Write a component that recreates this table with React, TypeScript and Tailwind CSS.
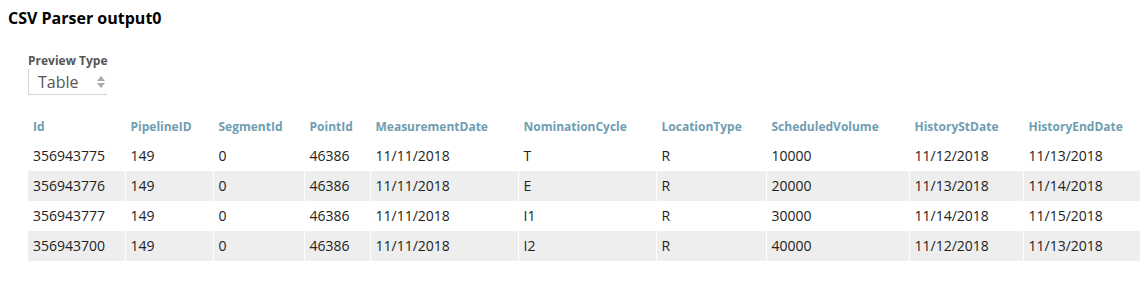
const columns = [
  { key: "Id", width: "w-[97px]" },
  { key: "PipelineID", width: "w-[88px]" },
  { key: "SegmentId", width: "w-[91px]" },
  { key: "PointId", width: "w-[66px]" },
  { key: "MeasurementDate", width: "w-[148px]" },
  { key: "NominationCycle", width: "w-[138px]" },
  { key: "LocationType", width: "w-[110px]" },
  { key: "ScheduledVolume", width: "w-[143px]" },
  { key: "HistoryStDate", width: "w-[114px]" },
  { key: "HistoryEndDate", width: "w-[117px]" },
];

const rows: string[][] = [
  ["356943775", "149", "0", "46386", "11/11/2018", "T", "R", "10000", "11/12/2018", "11/13/2018"],
  ["356943776", "149", "0", "46386", "11/11/2018", "E", "R", "20000", "11/13/2018", "11/14/2018"],
  ["356943777", "149", "0", "46386", "11/11/2018", "I1", "R", "30000", "11/14/2018", "11/15/2018"],
  ["356943700", "149", "0", "46386", "11/11/2018", "I2", "R", "40000", "11/12/2018", "11/13/2018"],
];

export default function App() {
  return (
    <div className="w-[1140px] h-[287px] bg-white font-['Open_Sans',sans-serif] text-[#222]">
      <h1 className="pl-2 pt-[6px] text-[16px] leading-6 font-bold text-black">
        CSV Parser output0
      </h1>

      <div className="ml-7 mt-[23px]">
        <label className="block text-[12px] leading-4 font-bold text-[#555]">
          Preview Type
        </label>
        <div className="flex items-center justify-between w-[79px] h-[26px] border-l border-b border-[#d4d4d4] pl-[9px] pr-[2px]">
          <span className="text-[16px] leading-5 text-[#555]">Table</span>
          <svg width="8" height="12" viewBox="0 0 8 12" className="fill-[#aaa]">
            <path d="M4 0 L8 5 L0 5 Z" />
            <path d="M0 7 L8 7 L4 12 Z" />
          </svg>
        </div>
      </div>

      <table className="ml-7 mt-[16px] w-[1112px] border-collapse table-fixed">
        <thead>
          <tr className="h-[30px]">
            {columns.map((c) => (
              <th
                key={c.key}
                className={`${c.width} pl-[5px] pt-[1px] text-left align-middle text-[12px] font-bold text-[#6f9db1] border-r border-white`}
              >
                {c.key}
              </th>
            ))}
          </tr>
        </thead>
        <tbody>
          {rows.map((r, i) => (
            <tr key={i} className={i % 2 === 1 ? "h-[30px] bg-[#eeeeee]" : "h-[30px] bg-white"}>
              {r.map((v, j) => (
                <td
                  key={j}
                  className="pl-[5px] text-[14px] leading-5 align-middle border-r border-white"
                >
                  {v}
                </td>
              ))}
            </tr>
          ))}
        </tbody>
      </table>
    </div>
  );
}
